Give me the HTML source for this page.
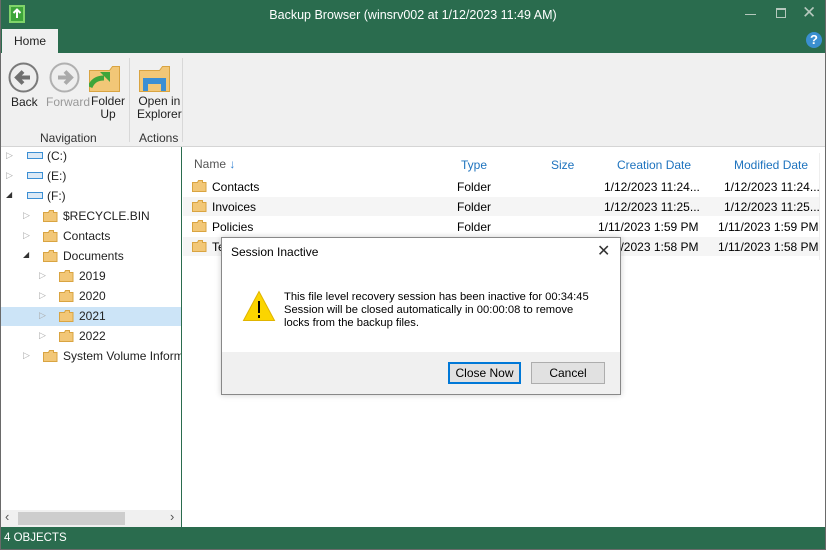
<!DOCTYPE html>
<html><head><meta charset="utf-8"><style>
*{margin:0;padding:0;box-sizing:border-box}
body{width:826px;height:550px;overflow:hidden;font-family:"Liberation Sans",sans-serif;font-size:12px;color:#000;background:#fff;position:relative}
.a{position:absolute;white-space:nowrap}
.g{background:#2a6c4e}
.fold{position:absolute;width:15px;height:12px}
</style></head><body>
<svg width="0" height="0" style="position:absolute"><defs>
<g id="f"><path d="M0.5 2.5h5l1-2h4v2h3.5v9h-13.5z" fill="#f2c777" stroke="#d9a441"/></g>
</defs></svg>
<div class="a g" style="left:0;top:0;width:826px;height:53px"></div>
<div class="a" style="left:9px;top:5px;width:16px;height:18px;border:2px solid #7fd46a;background:#3da53a"></div>
<svg class="a" style="left:9px;top:5px" width="16" height="18"><path d="M8 4v9M4.5 8L8 4.5 11.5 8" stroke="#fff" stroke-width="2" fill="none"/></svg>
<div class="a" style="left:0;width:826px;top:8px;text-align:center;color:#fff;font-size:12.5px">Backup Browser (winsrv002 at 1/12/2023 11:49 AM)</div>
<div class="a" style="left:745px;top:14px;width:11px;height:1px;background:#b5c8bd"></div>
<div class="a" style="left:776px;top:8px;width:10px;height:10px;border:1px solid #b5c8bd;border-top-width:2px"></div>
<div class="a" style="left:802px;top:3px;color:#b5c8bd;font-size:17px">✕</div>
<div class="a" style="left:806px;top:32px;width:16px;height:16px;border-radius:50%;background:#3a8fd0;color:#fff;font-weight:bold;font-size:13px;text-align:center;line-height:16px">?</div>
<div class="a" style="left:2px;top:29px;width:56px;height:25px;background:#f0f0f0;text-align:center;line-height:24px;color:#222">Home</div>
<div class="a" style="left:0;top:53px;width:826px;height:94px;background:#f0f0f0;border-bottom:1px solid #d5d5d5"></div>
<svg class="a" style="left:8px;top:62px" width="32" height="32"><circle cx="15.5" cy="15.5" r="14" fill="#eee" stroke="#7a7a7a" stroke-width="2"/><path d="M22 15.5H10M15 9.5l-6 6 6 6" stroke="#6f6f6f" stroke-width="4" fill="none"/></svg>
<svg class="a" style="left:49px;top:62px" width="32" height="32"><circle cx="15.5" cy="15.5" r="14" fill="#eee" stroke="#b0b0b0" stroke-width="2"/><path d="M9 15.5h12M16 9.5l6 6-6 6" stroke="#aaa" stroke-width="4" fill="none"/></svg>
<svg class="a" style="left:89px;top:66px" width="32" height="26"><path d="M0.5 4.5h20l3-4h7v25h-30z" fill="#f2c777" stroke="#d9a441"/><path d="M1 21c3-7 8-9 14-9" stroke="#3da53a" stroke-width="5" fill="none"/><path d="M11 6h10v10z" fill="#3da53a"/></svg>
<svg class="a" style="left:139px;top:66px" width="32" height="26"><path d="M0.5 4.5h20l3-4h7v25h-30z" fill="#f2c777" stroke="#d9a441"/><path d="M4 25V12h23v13h-5v-7h-13v7z" fill="#3b8fd4"/></svg>
<div class="a" style="left:11px;top:95px;color:#222">Back</div>
<div class="a" style="left:46px;top:95px;color:#999">Forward</div>
<div class="a" style="left:91px;top:95px;color:#222;text-align:center;line-height:13px">Folder<br>Up</div>
<div class="a" style="left:137px;top:95px;color:#222;text-align:center;line-height:13px">Open in<br>Explorer</div>
<div class="a" style="left:40px;top:131px;color:#333">Navigation</div>
<div class="a" style="left:139px;top:131px;color:#333">Actions</div>
<div class="a" style="left:129px;top:58px;width:1px;height:84px;background:#d8d8d8"></div>
<div class="a" style="left:182px;top:58px;width:1px;height:84px;background:#d8d8d8"></div>
<div class="a" style="left:0;top:147px;width:181px;height:380px;background:#fff"></div>
<div class="a" style="left:181px;top:147px;width:1px;height:380px;background:#2a6c4e"></div>
<div class="a" style="left:1px;top:307px;width:180px;height:19px;background:#cce4f7"></div>
<div class="a" style="left:0;top:510px;width:181px;height:17px;background:#f0f0f0"></div>
<div class="a" style="left:18px;top:512px;width:107px;height:13px;background:#cdcdcd"></div>
<div class="a" style="left:5px;top:509px;color:#555;font-size:13px">‹</div>
<div class="a" style="left:170px;top:509px;color:#555;font-size:13px">›</div>
<div style="color:#222;font-size:12px">
<div class="a" style="left:6px;top:150px;color:#aaa;font-size:9px">▷</div>
<div class="a" style="left:6px;top:170px;color:#aaa;font-size:9px">▷</div>
<div class="a" style="left:6px;top:190px;color:#333;font-size:8px">◢</div>
<div class="a" style="left:23px;top:210px;color:#aaa;font-size:9px">▷</div>
<div class="a" style="left:23px;top:230px;color:#aaa;font-size:9px">▷</div>
<div class="a" style="left:23px;top:250px;color:#333;font-size:8px">◢</div>
<div class="a" style="left:39px;top:270px;color:#aaa;font-size:9px">▷</div>
<div class="a" style="left:39px;top:290px;color:#aaa;font-size:9px">▷</div>
<div class="a" style="left:39px;top:310px;color:#aaa;font-size:9px">▷</div>
<div class="a" style="left:39px;top:330px;color:#aaa;font-size:9px">▷</div>
<div class="a" style="left:23px;top:350px;color:#aaa;font-size:9px">▷</div>
<div class="a" style="left:27px;top:152px;width:16px;height:7px;border:1px solid #3b8fd4;background:#dbe9f6"></div>
<div class="a" style="left:27px;top:172px;width:16px;height:7px;border:1px solid #3b8fd4;background:#dbe9f6"></div>
<div class="a" style="left:27px;top:192px;width:16px;height:7px;border:1px solid #3b8fd4;background:#dbe9f6"></div>
<div class="a" style="left:47px;top:149px">(C:)</div>
<div class="a" style="left:47px;top:169px">(E:)</div>
<div class="a" style="left:47px;top:189px">(F:)</div>
<svg class="fold" style="left:43px;top:210px"><use href="#f"/></svg>
<svg class="fold" style="left:43px;top:230px"><use href="#f"/></svg>
<svg class="fold" style="left:43px;top:250px"><use href="#f"/></svg>
<svg class="fold" style="left:59px;top:270px"><use href="#f"/></svg>
<svg class="fold" style="left:59px;top:290px"><use href="#f"/></svg>
<svg class="fold" style="left:59px;top:310px"><use href="#f"/></svg>
<svg class="fold" style="left:59px;top:330px"><use href="#f"/></svg>
<svg class="fold" style="left:43px;top:350px"><use href="#f"/></svg>
<div class="a" style="left:63px;top:209px">$RECYCLE.BIN</div>
<div class="a" style="left:63px;top:229px">Contacts</div>
<div class="a" style="left:63px;top:249px">Documents</div>
<div class="a" style="left:79px;top:269px">2019</div>
<div class="a" style="left:79px;top:289px">2020</div>
<div class="a" style="left:79px;top:309px">2021</div>
<div class="a" style="left:79px;top:329px">2022</div>
<div class="a" style="left:63px;top:349px;width:118px;overflow:hidden">System Volume Information</div>
</div>
<div class="a" style="left:183px;top:197px;width:637px;height:19px;background:#f5f5f5"></div>
<div class="a" style="left:183px;top:237px;width:637px;height:19px;background:#f5f5f5"></div>
<div class="a" style="left:819px;top:153px;width:1px;height:107px;background:#eee"></div>
<div class="a" style="left:194px;top:157px;color:#555">Name <span style="color:#2f7fd0;font-weight:bold">↓</span></div>
<div class="a" style="left:461px;top:158px;color:#1e73be">Type</div>
<div class="a" style="left:551px;top:158px;color:#1e73be">Size</div>
<div class="a" style="left:617px;top:158px;color:#1e73be">Creation Date</div>
<div class="a" style="left:734px;top:158px;color:#1e73be">Modified Date</div>
<svg class="fold" style="left:192px;top:180px"><use href="#f"/></svg>
<svg class="fold" style="left:192px;top:200px"><use href="#f"/></svg>
<svg class="fold" style="left:192px;top:220px"><use href="#f"/></svg>
<svg class="fold" style="left:192px;top:240px"><use href="#f"/></svg>
<div class="a" style="left:212px;top:180px">Contacts</div>
<div class="a" style="left:212px;top:200px">Invoices</div>
<div class="a" style="left:212px;top:220px">Policies</div>
<div class="a" style="left:212px;top:240px">Te</div>
<div class="a" style="left:457px;top:180px">Folder</div>
<div class="a" style="left:457px;top:200px">Folder</div>
<div class="a" style="left:457px;top:220px">Folder</div>
<div class="a" style="left:604px;top:180px">1/12/2023 11:24...</div>
<div class="a" style="left:604px;top:200px">1/12/2023 11:25...</div>
<div class="a" style="left:598px;top:220px">1/11/2023 1:59 PM</div>
<div class="a" style="left:598px;top:240px">1/11/2023 1:58 PM</div>
<div class="a" style="left:724px;top:180px">1/12/2023 11:24...</div>
<div class="a" style="left:724px;top:200px">1/12/2023 11:25...</div>
<div class="a" style="left:718px;top:220px">1/11/2023 1:59 PM</div>
<div class="a" style="left:718px;top:240px">1/11/2023 1:58 PM</div>
<div class="a" style="left:221px;top:237px;width:400px;height:158px;background:#fff;border:1px solid #888;box-shadow:0 0 6px rgba(0,0,0,.2)"></div>
<div class="a" style="left:222px;top:352px;width:398px;height:42px;background:#f0f0f0"></div>
<div class="a" style="left:231px;top:245px">Session Inactive</div>
<div class="a" style="left:597px;top:241px;font-size:16px;color:#333">✕</div>
<svg class="a" style="left:242px;top:290px" width="34" height="32"><path d="M17 1.5L32.5 30.5H1.5z" fill="#fbd500" stroke="#e0b400"/><path d="M17 11v12M17 25v3" stroke="#000" stroke-width="2"/></svg>
<div class="a" style="left:284px;top:291px;font-size:11.2px;line-height:13px">This file level recovery session has been inactive for 00:34:45<br>Session will be closed automatically in 00:00:08 to remove<br>locks from the backup files.</div>
<div class="a" style="left:448px;top:362px;width:73px;height:22px;border:2px solid #0078d7;background:#e1e1e1;text-align:center;line-height:18px">Close Now</div>
<div class="a" style="left:531px;top:362px;width:74px;height:22px;border:1px solid #adadad;background:#e1e1e1;text-align:center;line-height:20px">Cancel</div>
<div class="a g" style="left:0;top:527px;width:826px;height:23px"></div>
<div class="a" style="left:4px;top:532px;color:#fff;font-size:11.5px">4 OBJECTS</div>
<div class="a" style="left:0;top:0;width:826px;height:550px;border:1px solid #6a6a6a;border-top:none"></div>
</body></html>
